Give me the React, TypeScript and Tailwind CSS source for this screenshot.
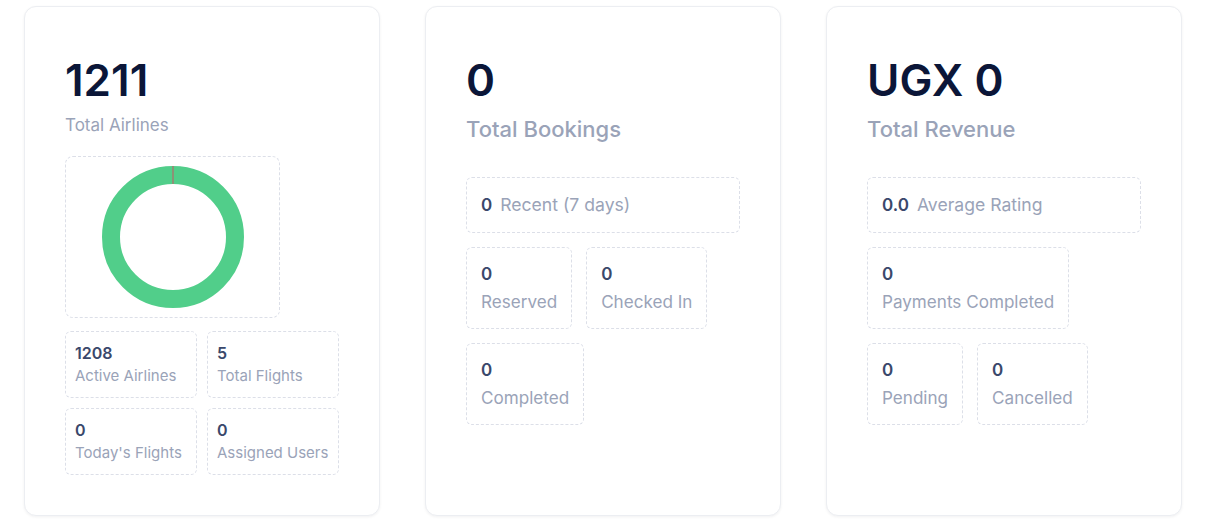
import React from "react";

type Stat = { value: string; label: string };

const font = { fontFamily: "Inter, 'Noto Sans', sans-serif" };

// airlines donut, active vs inactive
function Donut() {
  const r = 62;
  return (
    <svg width="144" height="144" viewBox="0 0 144 144">
      <circle cx="72" cy="72" r={r} fill="none" stroke="#51ce8a" strokeWidth="18" />
      <line x1="72" y1="1" x2="72" y2="19" stroke="#d9485f" strokeWidth="0.9" />
    </svg>
  );
}

function SmallBox({ s }: { s: Stat }) {
  return (
    <div className="rounded-md border border-dashed border-[#dcdfe8] px-[9px] py-[10px]">
      <div className="text-[16px] leading-[22px] font-semibold text-[#3a486b]">{s.value}</div>
      <div className="text-[15px] leading-[23px] text-[#9aa3b8]">{s.label}</div>
    </div>
  );
}

function Box({ s }: { s: Stat }) {
  return (
    <div className="rounded-md border border-dashed border-[#dcdfe8] px-[14px] py-[13px]">
      <div className="text-[17px] leading-[27px] font-semibold text-[#3a486b]">{s.value}</div>
      <div className="text-[17.1px] leading-[27px] text-[#9aa3b8] whitespace-nowrap">{s.label}</div>
    </div>
  );
}

function WideBox({ s }: { s: Stat }) {
  return (
    <div className="flex items-center gap-[8px] rounded-md border border-dashed border-[#dcdfe8] px-[14px] py-[13px]">
      <span className="text-[17px] leading-[28px] font-semibold text-[#3a486b]">{s.value}</span>
      <span className="text-[17.6px] leading-[28px] text-[#9aa3b8]">{s.label}</span>
    </div>
  );
}

function Card({ children }: { children: React.ReactNode }) {
  return (
    <div className="rounded-xl border border-[#eceef2] bg-white px-10 pt-[47px] pb-10 shadow-[0_1px_3px_rgba(15,23,42,0.06)]">
      {children}
    </div>
  );
}

export default function App() {
  const airlineStats: Stat[] = [
    { value: "1208", label: "Active Airlines" },
    { value: "5", label: "Total Flights" },
    { value: "0", label: "Today's Flights" },
    { value: "0", label: "Assigned Users" },
  ];

  return (
    <div className="min-h-screen bg-white" style={font}>
      <div className="grid grid-cols-3 gap-[45px] pl-6 pr-[26px] pt-[6px] pb-[3px]">
        {/* Airlines */}
        <Card>
          <div className="text-[44px] leading-[53px] font-semibold text-[#0b1638]">1211</div>
          <div className="mt-[6px] text-[17px] leading-6 text-[#9aa3b8]">Total Airlines</div>
          <div className="mt-[19px] flex h-[162px] w-[215px] items-center justify-center rounded-lg border border-dashed border-[#dcdfe8]">
            <Donut />
          </div>
          <div className="mt-[13px] grid grid-cols-2 gap-x-[10px] gap-y-[10px]">
            {airlineStats.map((s) => (
              <SmallBox key={s.label} s={s} />
            ))}
          </div>
        </Card>

        {/* Bookings */}
        <Card>
          <div className="text-[44px] leading-[53px] font-semibold text-[#0b1638]">0</div>
          <div className="mt-[8px] text-[22px] leading-7 font-medium text-[#9aa3b8]">Total Bookings</div>
          <div className="mt-[34px] flex flex-col gap-[14px]">
            <WideBox s={{ value: "0", label: "Recent (7 days)" }} />
            <div className="flex flex-wrap gap-[14px]">
              <Box s={{ value: "0", label: "Reserved" }} />
              <Box s={{ value: "0", label: "Checked In" }} />
              <Box s={{ value: "0", label: "Completed" }} />
            </div>
          </div>
        </Card>

        {/* Revenue */}
        <Card>
          <div className="text-[44px] leading-[53px] font-semibold text-[#0b1638]">UGX 0</div>
          <div className="mt-[8px] text-[22px] leading-7 font-medium text-[#9aa3b8]">Total Revenue</div>
          <div className="mt-[34px] flex flex-col gap-[14px]">
            <WideBox s={{ value: "0.0", label: "Average Rating" }} />
            <div className="flex flex-wrap gap-[14px]">
              <Box s={{ value: "0", label: "Payments Completed" }} />
              <Box s={{ value: "0", label: "Pending" }} />
              <Box s={{ value: "0", label: "Cancelled" }} />
            </div>
          </div>
        </Card>
      </div>
    </div>
  );
}
